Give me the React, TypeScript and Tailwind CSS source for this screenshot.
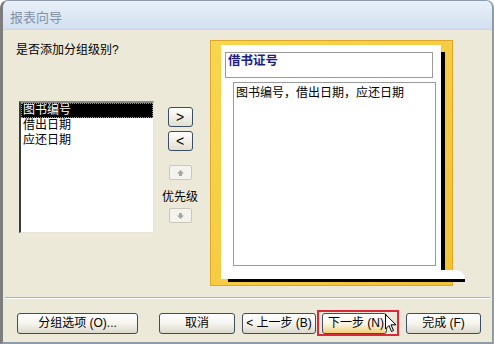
import React from "react";

const btn =
  "flex h-[21px] items-center justify-center rounded-[3px] border border-[#3c4e63] bg-gradient-to-b from-[#ffffff] via-[#f5f4ee] to-[#dcd9cb] text-[12px] leading-none text-black";

function ArrowBtn({ label }: { label: string }) {
  return (
    <div className="flex h-[20px] w-[25px] items-center justify-center rounded-[3px] border border-[#3c4e63] bg-gradient-to-b from-[#ffffff] to-[#e2dfd2] text-[14px] leading-none text-black">
      {label}
    </div>
  );
}

function DisabledBtn({ up }: { up?: boolean }) {
  return (
    <div className="flex h-[15px] w-[23px] items-center justify-center rounded-[2px] border border-[#cac8bb] bg-[#f4f3ee]">
      <svg width="7" height="6" viewBox="0 0 7 6">
        {up ? (
          <path d="M3.5 0 L7 3.5 H5 V6 H2 V3.5 H0 Z" fill="#a7a69c" />
        ) : (
          <path d="M3.5 6 L7 2.5 H5 V0 H2 V2.5 H0 Z" fill="#a7a69c" />
        )}
      </svg>
    </div>
  );
}

export default function App() {
  const items = ["图书编号", "借出日期", "应还日期"];

  return (
    <div className="flex h-[344px] w-[494px] flex-col overflow-hidden rounded-t-[8px] border-b-2 border-l-[3px] border-r-2 border-t border-[#8d9bab] border-l-[#7d7d7d] border-l-dotted bg-[#ece9d8] font-['Liberation_Sans','Noto_Sans_CJK_SC',sans-serif] text-black">
      {/* title bar */}
      <div className="flex h-[29px] shrink-0 items-center border-b border-[#c6d4e4] bg-gradient-to-b from-[#e9f0f9] to-[#d2e0f0] pl-[7px] pt-[6px] text-[13px] text-[#8291a4]">
        报表向导
      </div>

      {/* main area */}
      <div className="flex h-[267px] shrink-0">
        <div className="flex w-[207px] flex-col pl-[13px]">
          <div className="mt-[13px] text-[12px] leading-[14px]">是否添加分组级别?</div>

          <div className="mt-[44px] flex items-start">
            <div className="ml-[3px] h-[132px] w-[135px] border-b border-l-2 border-r border-t-2 border-b-[#e6e4da] border-l-[#3a3a3a] border-r-[#e6e4da] border-t-[#8a8a8a] bg-white">
              {items.map((t, i) => (
                <div
                  key={t}
                  className={
                    i === 0
                      ? "h-[15px] bg-black pl-[2px] text-[12px] leading-[15px] text-white outline-1 outline-dotted -outline-offset-1 outline-[#9a9a9a]"
                      : "h-[15px] pl-[2px] text-[12px] leading-[15px]"
                  }
                >
                  {t}
                </div>
              ))}
            </div>

            <div className="ml-[6px] flex w-[40px] flex-col items-center">
              <div className="mt-[6px]">
                <ArrowBtn label=">" />
              </div>
              <div className="mt-[4px]">
                <ArrowBtn label="<" />
              </div>
              <div className="mt-[14px]">
                <DisabledBtn up />
              </div>
              <div className="mt-[10px] text-[12px] leading-[14px]">优先级</div>
              <div className="mt-[4px]">
                <DisabledBtn />
              </div>
            </div>
          </div>
        </div>

        {/* preview */}
        <div className="relative mt-[10px] h-[246px] w-[243px] border border-[#dca72a] bg-gradient-to-br from-[#f9d64f] to-[#f2c234]">
          <div className="absolute left-[10px] top-[4px] flex h-[234px] w-[220px] flex-col bg-white pl-[4px] pt-[7px]">
            <div className="h-[26px] w-[208px] border border-[#9a9a9a] pl-[2px] pt-[1px] text-[12.5px] font-bold leading-[14px] text-[#1d1d8a]">
              借书证号
            </div>
            <div className="ml-[8px] mt-[4px] h-[184px] w-[203px] border border-[#9a9a9a] pl-[2px] pt-[3px] text-[12px] leading-[14px]">
              图书编号，借出日期，应还日期
            </div>
          </div>
          <div className="absolute left-[230px] top-[11px] h-[218px] w-[4px] bg-black" />
          <div className="absolute left-[230px] top-[229px] h-[9px] w-[24px] rounded-tr-[9px] bg-white" />
          <div className="absolute left-[17px] top-[238px] h-[3px] w-[237px] bg-black" />
        </div>
      </div>

      {/* separator */}
      <div className="mx-[2px] border-b border-t border-b-white border-t-[#b5b2a3]" />

      {/* bottom buttons */}
      <div className="mt-[11px] flex items-center pl-[14px]">
        <div className={`${btn} w-[121px]`}>分组选项 (O)...</div>
        <div className={`${btn} ml-[21px] w-[76px]`}>取消</div>
        <div className={`${btn} ml-[7px] w-[74px]`}>&lt; 上一步 (B)</div>
        <div className="relative ml-[1px] flex h-[26px] w-[82px] items-center border-2 border-[#d8283a] pl-[3px]">
          <div className="flex h-[21px] w-[65px] items-center rounded-[3px] border border-[#3c4e63] bg-gradient-to-b from-[#ffffff] via-[#fbf6e4] to-[#f2cf78] pl-[5px] text-[12px] leading-none">
            下一步 (N)
          </div>
          <svg className="absolute left-[66px] top-[2px]" width="12" height="19" viewBox="0 0 12 19">
            <path
              d="M0.5 0.5 V15 L4 11.5 L6.5 17.5 L8.5 16.6 L6 10.8 H11 Z"
              fill="white"
              stroke="black"
              strokeWidth="1"
              strokeLinejoin="miter"
            />
          </svg>
        </div>
        <div className={`${btn} ml-[7px] w-[75px]`}>完成 (F)</div>
      </div>
    </div>
  );
}
